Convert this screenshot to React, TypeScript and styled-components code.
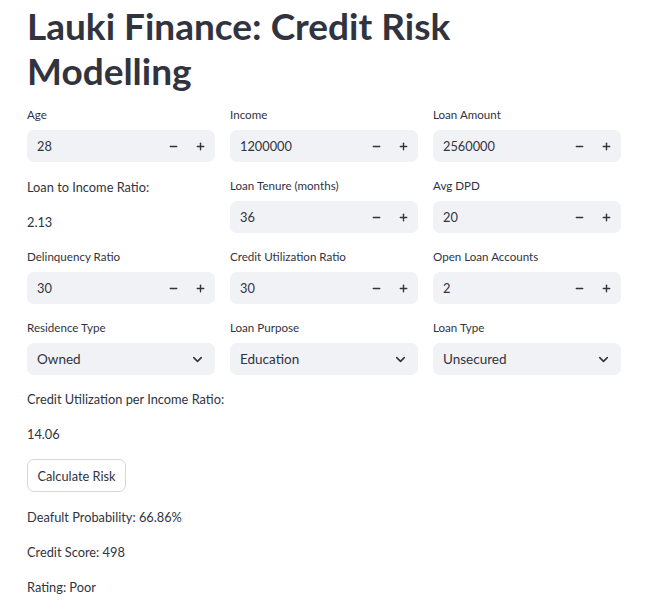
import React from 'react';
import styled, { createGlobalStyle } from 'styled-components';
import { Minus, Plus, ChevronDown } from 'lucide-react';

const GlobalStyle = createGlobalStyle`
  body {
    margin: 0;
    background: #ffffff;
    color: #31333f;
    font-family: Lato, "Noto Sans", sans-serif;
  }
`

const Page = styled.div`
  width: 594px;
  padding: 0 0 0 27px;
`

const Title = styled.h1`
  margin: 0;
  padding-top: 3px;
  font-size: 37px;
  line-height: 45px;
  font-weight: 700;
  color: #31333f;
  width: 450px;
`

const Grid = styled.div`
  display: grid;
  grid-template-columns: repeat(3, 1fr);
  column-gap: 15px;
  row-gap: 16px;
  margin-top: 14px;
`

const Field = styled.div`
  display: flex;
  flex-direction: column;
`

const Label = styled.label`
  font-size: 11.6px;
  line-height: 16px;
  margin-bottom: 7px;
`

const Box = styled.div`
  height: 32px;
  background: #f0f2f6;
  border-radius: 7px;
  display: flex;
  align-items: center;
  padding-left: 10px;
  font-size: 13.5px;
`

const Value = styled.span<{ $numeric?: boolean }>`
  flex: 1;
  font-size: ${p => (p.$numeric ? '12.8px' : '13.5px')};
`

const StepButton = styled.span`
  width: 27px;
  display: flex;
  justify-content: center;
  align-items: center;
  color: #31333f;
`

const Chevron = styled.span`
  width: 36px;
  display: flex;
  justify-content: center;
`

const Text = styled.p<{ $gap?: number }>`
  margin: 0;
  margin-top: ${p => p.$gap ?? 0}px;
  font-size: 12.8px;
  line-height: 18px;
`

const Stack = styled.div`
  display: flex;
  flex-direction: column;
  gap: 17px;
  margin-top: 15px;
`

const Button = styled.button`
  align-self: flex-start;
  height: 33px;
  width: 99px;
  margin: -1px 0;
  background: #ffffff;
  border: 1px solid #d6d6d9;
  border-radius: 7px;
  font-family: inherit;
  font-size: 12.8px;
  color: #31333f;
  padding: 0;
`

const NumberInput = ({ label, value }: { label: string; value: string }) => (
    <Field>
        <Label>{label}</Label>
        <Box>
            <Value $numeric>{value}</Value>
            <StepButton><Minus size={11} strokeWidth={3} /></StepButton>
            <StepButton><Plus size={11} strokeWidth={3} /></StepButton>
            <span style={{ width: 1 }} />
        </Box>
    </Field>
)

const Select = ({ label, value }: { label: string; value: string }) => (
    <Field>
        <Label>{label}</Label>
        <Box>
            <Value>{value}</Value>
            <Chevron><ChevronDown size={15} strokeWidth={2.5} /></Chevron>
        </Box>
    </Field>
)

const App = () => {
    return (
        <>
            <GlobalStyle />
            <Page>
                <Title>Lauki Finance: Credit Risk Modelling</Title>
                <Grid>
                    <NumberInput label="Age" value="28" />
                    <NumberInput label="Income" value="1200000" />
                    <NumberInput label="Loan Amount" value="2560000" />

                    <Field>
                        <Text>Loan to Income Ratio:</Text>
                        <Text $gap={17}>2.13</Text>
                    </Field>
                    <NumberInput label="Loan Tenure (months)" value="36" />
                    <NumberInput label="Avg DPD" value="20" />

                    <NumberInput label="Delinquency Ratio" value="30" />
                    <NumberInput label="Credit Utilization Ratio" value="30" />
                    <NumberInput label="Open Loan Accounts" value="2" />

                    <Select label="Residence Type" value="Owned" />
                    <Select label="Loan Purpose" value="Education" />
                    <Select label="Loan Type" value="Unsecured" />
                </Grid>
                <Stack>
                    <Text>Credit Utilization per Income Ratio:</Text>
                    <Text>14.06</Text>
                    <Button>Calculate Risk</Button>
                    <Text>Deafult Probability: 66.86%</Text>
                    <Text>Credit Score: 498</Text>
                    <Text>Rating: Poor</Text>
                </Stack>
            </Page>
        </>
    )
}

export default App;
